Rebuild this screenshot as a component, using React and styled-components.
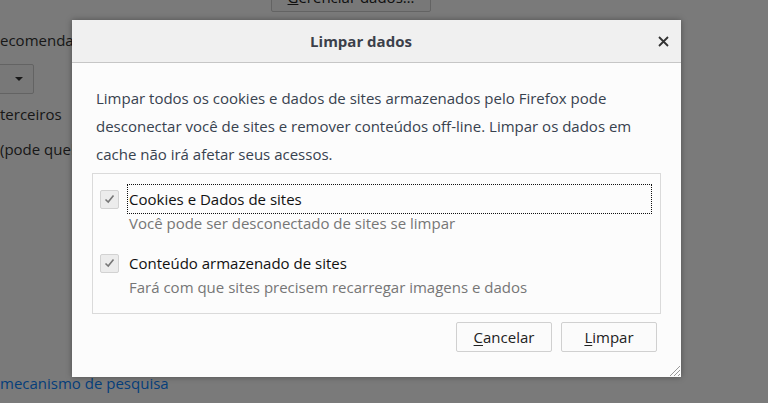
import styled, { createGlobalStyle } from "styled-components";

const GlobalStyle = createGlobalStyle`
  html, body {
    margin: 0;
    padding: 0;
    overflow: hidden;
  }
  body {
    width: 768px;
    height: 403px;
    background: #ffffff;
    font-family: "Open Sans", "Noto Sans", sans-serif;
  }
`;

const Page = styled.div`
  position: relative;
  width: 768px;
  height: 403px;
  overflow: hidden;
`;

const PageContent = styled.div`
  display: flex;
  flex-direction: column;
  align-items: flex-start;
  margin-top: -18px;
  color: #333;
  font-size: 15px;
`;

const ManageRow = styled.div`
  display: flex;
  padding-left: 271px;
`;

const PageButton = styled.div`
  width: 158px;
  height: 28px;
  border: 1px solid #d0d0d0;
  border-radius: 2px;
  background: #fbfbfb;
  display: flex;
  align-items: center;
  justify-content: center;
  color: #222;
`;

const Column = styled.div`
  width: 72px;
  overflow: hidden;
  display: flex;
  flex-direction: column;
  align-items: flex-start;
`;

const PageLine = styled.div`
  height: ${(p) => p.h || 34}px;
  display: flex;
  align-items: center;
  white-space: nowrap;
  margin-top: ${(p) => p.mt || 0}px;
`;

const Dropdown = styled.div`
  width: 70px;
  height: 30px;
  margin-left: -36px;
  border: 1px solid #cfcfcf;
  border-radius: 2px;
  background: #fbfbfb;
  display: flex;
  align-items: center;
  justify-content: flex-end;
  padding-right: 10px;
  box-sizing: border-box;
  margin-top: 4px;
`;

const Arrow = styled.div`
  width: 0;
  height: 0;
  border-left: 4px solid transparent;
  border-right: 4px solid transparent;
  border-top: 4px solid #333;
`;

const Link = styled.div`
  color: #0a84ff;
  white-space: nowrap;
  font-size: 15px;
`;

const Backdrop = styled.div`
  position: absolute;
  inset: 0;
  background: rgba(0, 0, 0, 0.52);
`;

const Dialog = styled.div`
  position: absolute;
  left: 72px;
  top: 20px;
  width: 609px;
  height: 357px;
  background: #fcfcfc;
  box-shadow: 0 0 6px rgba(0, 0, 0, 0.35);
  display: flex;
  flex-direction: column;
  font-family: "Open Sans", "Noto Sans", sans-serif;
`;

const Header = styled.div`
  height: 43px;
  flex-shrink: 0;
  background: #f0f0f0;
  border-bottom: 1px solid #c6c6c6;
  display: flex;
  align-items: center;
  box-sizing: border-box;
`;

const Title = styled.div`
  flex: 1;
  text-align: center;
  font-size: 15px;
  font-weight: 700;
  color: #3b3f4a;
`;

const CloseButton = styled.div`
  width: 31px;
  height: 43px;
  display: flex;
  align-items: center;
  justify-content: flex-start;
  padding-left: 8px;
  box-sizing: border-box;
`;

const Body = styled.div`
  flex: 1;
  display: flex;
  flex-direction: column;
  padding: 21px 20px 0 20px;
  position: relative;
`;

const Description = styled.p`
  margin: 0 0 5px 0;
  padding-left: 4px;
  font-size: 15px;
  line-height: 28px;
  color: #38424f;
`;

const Group = styled.div`
  border: 1px solid #dadada;
  height: 141px;
  box-sizing: border-box;
  padding: 10px 7px 0 7px;
  display: flex;
  flex-direction: column;
  gap: 16px;
`;

const Option = styled.div`
  display: grid;
  grid-template-columns: 19px 1fr;
  column-gap: 8px;
  align-items: center;
`;

const Box = styled.div`
  width: 19px;
  height: 19px;
  box-sizing: border-box;
  border: 1px solid #d2d2d2;
  border-radius: 2px;
  background: #ececec;
  display: flex;
  align-items: center;
  justify-content: center;
`;

const Label = styled.div`
  height: 30px;
  display: flex;
  align-items: center;
  padding-left: 1px;
  box-sizing: border-box;
  font-size: 15px;
  color: #111;
  border: 1px dotted ${(p) => (p.focused ? "#111" : "transparent")};
  margin-right: 1px;
`;

const Note = styled.div`
  grid-column: 2;
  padding-left: 2px;
  font-size: 15px;
  color: #767676;
  line-height: 18px;
`;

const Footer = styled.div`
  display: flex;
  justify-content: flex-end;
  gap: 9px;
  padding: 8px 4px 0 0;
`;

const Button = styled.div`
  width: 96px;
  height: 30px;
  box-sizing: border-box;
  border: 1px solid #d0d0d0;
  border-radius: 2px;
  background: #fbfbfb;
  display: flex;
  align-items: center;
  justify-content: center;
  font-size: 15px;
  color: #222;
  u {
    text-decoration: underline;
    text-underline-offset: 2px;
  }
`;

const Grip = styled.svg`
  position: absolute;
  right: 0;
  bottom: 0;
`;

const Check = () => (
  <svg width="11" height="10" viewBox="0 0 11 10">
    <path d="M1.5 5.5 L4.2 8 L9.5 1.5" fill="none" stroke="#777" strokeWidth="1.6" />
  </svg>
);

const options = [
  {
    label: "Cookies e Dados de sites",
    note: "Você pode ser desconectado de sites se limpar",
    focused: true,
  },
  {
    label: "Conteúdo armazenado de sites",
    note: "Fará com que sites precisem recarregar imagens e dados",
    focused: false,
  },
];

const App = () => {
  return (
    <Page>
      <GlobalStyle />
      <PageContent>
        <ManageRow>
          <PageButton>
            <span>
              <u>G</u>erenciar dados…
            </span>
          </PageButton>
        </ManageRow>
        <Column>
          <PageLine h={40} mt={8}>ecomendado</PageLine>
          <Dropdown>
            <Arrow />
          </Dropdown>
          <PageLine h={38} mt={1}>terceiros</PageLine>
          <PageLine h={32}>(pode quebrar</PageLine>
        </Column>
        <PageLine h={22} mt={207}>
          <Link>mecanismo de pesquisa</Link>
        </PageLine>
      </PageContent>
      <Backdrop />
      <Dialog>
        <Header>
          <Title>Limpar dados</Title>
          <CloseButton>
            <svg width="11" height="11" viewBox="0 0 11 11">
              <path d="M1 1 L10 10 M10 1 L1 10" stroke="#333" strokeWidth="1.8" />
            </svg>
          </CloseButton>
        </Header>
        <Body>
          <Description>
            Limpar todos os cookies e dados de sites armazenados pelo Firefox pode
            desconectar você de sites e remover conteúdos off-line. Limpar os dados em
            cache não irá afetar seus acessos.
          </Description>
          <Group>
            {options.map((o) => (
              <Option key={o.label}>
                <Box>
                  <Check />
                </Box>
                <Label focused={o.focused}>{o.label}</Label>
                <Note>{o.note}</Note>
              </Option>
            ))}
          </Group>
          <Footer>
            <Button>
              <span>
                <u>C</u>ancelar
              </span>
            </Button>
            <Button>
              <span>
                <u>L</u>impar
              </span>
            </Button>
          </Footer>
          <Grip width="14" height="14" viewBox="0 0 14 14">
            <path d="M13 3 L3 13 M13 7 L7 13 M13 11 L11 13" stroke="#9a9a9a" strokeWidth="1" />
          </Grip>
        </Body>
      </Dialog>
    </Page>
  );
};

export default App;
